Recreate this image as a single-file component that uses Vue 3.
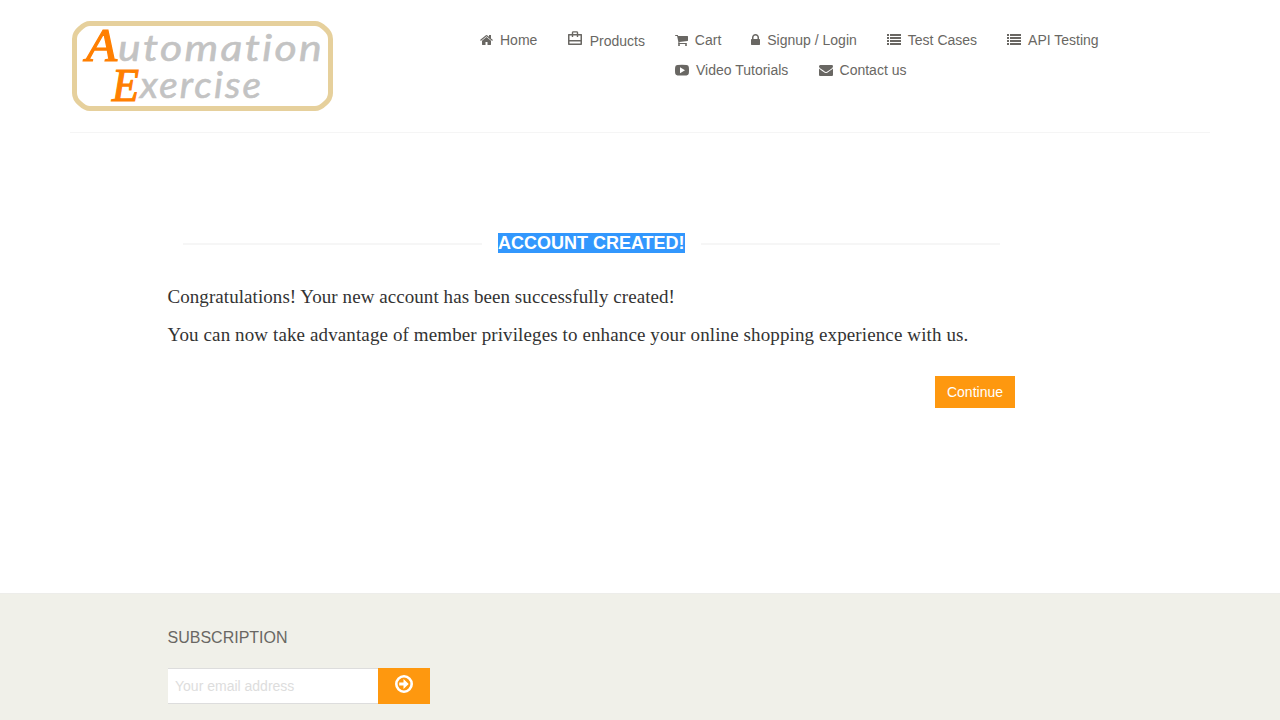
<script setup>
const icons = {
  home: { w: 13, box: '64 0 1664 1792', d: 'M1472 992v480q0 26-19 45t-45 19h-384v-384h-256v384h-384q-26 0-45-19t-19-45v-480q0-1 .5-3t.5-3l575-474 575 474q1 2 1 6zm223-69l-62 74q-8 9-21 11h-3q-13 0-21-7l-692-577-692 577q-12 8-24 7-13-2-21-11l-62-74q-8-10-7-23.5t11-21.5l719-599q32-26 76-26t76 26l244 204v-195q0-14 9-23t23-9h192q14 0 23 9t9 23v408l219 182q10 8 11 21.5t-7 23.5z' },
  bag: { w: 16, box: '0 0 16 14', d: 'M1.600 3H4.800V1.500Q5 .3 6.200 .3h3.600Q11 .3 11.200 1.500V3h3.200Q15 3 15 3.600v9.600q0 .8-.8.8H1.800Q1 14 1 13.200V3.600Q1 3 1.600 3zM6.200 1.600V3h3.600V1.600zM2.500 4.400v4.600h11V4.400H11.200V6H9.800V4.400H6.200V6H4.800V4.400zM2.500 10.500v2h11v-2z' },
  cart: { w: 13, box: '64 0 1664 1792', d: 'M704 1536q0 52-38 90t-90 38-90-38-38-90 38-90 90-38 90 38 38 90zm896 0q0 52-38 90t-90 38-90-38-38-90 38-90 90-38 90 38 38 90zm128-1088v512q0 24-16.5 42.5t-40.5 21.5l-1044 122q13 60 13 70 0 16-24 64h920q26 0 45 19t19 45-19 45-45 19h-1024q-26 0-45-19t-19-45q0-11 8-31.5t16-36 21.5-40 15.5-29.5l-177-823h-204q-26 0-45-19t-19-45 19-45 45-19h256q16 0 28.5 6.5t19.5 15.5 13 24.5 8 26 5.5 29.5 4.5 26h1201q26 0 45 19t19 45z' },
  lock: { w: 9, box: '320 0 1152 1792', d: 'M640 768h512v-192q0-106-75-181t-181-75-181 75-75 181v192zm832 96v576q0 40-28 68t-68 28h-960q-40 0-68-28t-28-68v-576q0-40 28-68t68-28h32v-192q0-184 132-316t316-132 316 132 132 316v192h32q40 0 68 28t28 68z' },
  list: { w: 14, box: '0 0 14 14', d: 'M0 1h2v2H0zM3 1h11v2H3zM0 4h2v2H0zM3 4h11v2H3zM0 7h2v2H0zM3 7h11v2H3zM0 10h2v2H0zM3 10h11v2H3z' },
  video: { w: 14, box: '0 0 14 14', d: 'M2.500 2Q7 1.700 11.500 2 13.600 2.100 13.800 4 14.200 7 13.800 10.500 13.600 12.300 11.500 12.400 7 12.700 2.500 12.400 .4 12.300 .2 10.500-.2 7 .2 4 .4 2.100 2.500 2zM5 4.200v6l5-3z' },
  mail: { w: 14, box: '0 0 1792 1792', d: 'M1792 710v794q0 66-47 113t-113 47h-1472q-66 0-113-47t-47-113v-794q44 49 101 87 362 246 497 345 57 42 92.500 65.500t94.500 48 110 24.500h2q51 0 110-24.500t94.500-48 92.500-65.500q170-123 498-345 57-39 100-87zm0-294q0 79-49 151t-122 123q-376 261-468 325-10 7-42.500 31t-54 38.500-52 32.500-57.500 27-50 9h-2q-23 0-50-9t-57.500-27-52-32.500-54-38.500-42.500-31q-91-64-262-182.500t-205-142.500q-62-42-117-115.500t-55-136.500q0-78 41.500-130t118.500-52h1472q65 0 112.500 47t47.500 113z' }
}
const rows = [
  [['home', 'Home'], ['bag', 'Products'], ['cart', 'Cart'], ['lock', 'Signup / Login'], ['list', 'Test Cases'], ['list', 'API Testing']],
  [['video', 'Video Tutorials'], ['mail', 'Contact us']]
]
</script>

<template>
  <div class="page">
    <header>
      <svg class="logo" width="262" height="90" viewBox="0 0 262 90">
        <path d="M18 2.500H243Q248 2.500 253 7.500Q258.500 12 258.500 18V72Q258.500 78 253 82.500Q248 87.500 243 87.500H18Q13 87.500 8 82.500Q2.500 78 2.500 72V18Q2.500 12 8 7.500Q13 2.500 18 2.500Z" fill="none" stroke="#e6d09c" stroke-width="5" />
        <g class="lettering">
          <text class="cap" x="14" y="40" textLength="31" lengthAdjust="spacingAndGlyphs">A</text>
          <text x="46" y="40" textLength="206" lengthAdjust="spacingAndGlyphs">utomation</text>
          <text class="cap" x="40" y="80" textLength="27" lengthAdjust="spacingAndGlyphs">E</text>
          <text x="68" y="77" textLength="123" lengthAdjust="spacingAndGlyphs">xercise</text>
        </g>
      </svg>
      <nav>
        <div v-for="(row, i) in rows" :key="i" class="row">
          <a v-for="[icon, label] in row" :key="label" :class="icon">
            <svg :width="icons[icon].w" height="14" :viewBox="icons[icon].box"><path :d="icons[icon].d" fill-rule="evenodd" /></svg>
            <span>{{ label }}</span>
          </a>
        </div>
      </nav>
    </header>
    <main>
      <h2><i></i><b>ACCOUNT CREATED!</b><i></i></h2>
      <p class="first">Congratulations! Your new account has been successfully created!</p>
      <p class="second">You can now take advantage of member privileges to enhance your online shopping experience with us.</p>
      <button class="continue">Continue</button>
    </main>
    <footer>
      <h3>SUBSCRIPTION</h3>
      <form @submit.prevent>
        <input type="email" placeholder="Your email address" />
        <button aria-label="Subscribe">
          <svg width="18" height="18" viewBox="0 0 18 18"><circle cx="9" cy="9" r="7.700" fill="none" stroke="#fff" stroke-width="2.600" /><path d="M4.200 7.500h4.300V4.100L13.700 9l-5.200 4.900v-3.400H4.200z" fill="#fff" /></svg>
        </button>
      </form>
    </footer>
  </div>
</template>

<style>
body { margin: 0; overflow: hidden; }
</style>
<style scoped>
* { box-sizing: border-box; }
.page { width: 1280px; height: 720px; background: #fff; font: 14px/20px "Liberation Sans", Arial, sans-serif; color: #696763; overflow: hidden; display: flex; flex-direction: column; }
header { width: 1140px; height: 133px; margin: 0 70px; padding: 21px 0 0 2px; border-bottom: 1px solid #f5f5f5; display: flex; flex: none; }
.logo { flex: none; overflow: visible; }
.lettering { font-family: Lato, sans-serif; font-style: italic; font-weight: 400; font-size: 36px; font-variant-ligatures: none; letter-spacing: 2px; fill: #c3c3c3; stroke: #c3c3c3; stroke-width: .600; }
.cap { font-family: "Liberation Serif", serif; letter-spacing: 0; font-size: 46px; fill: #ff7f00; stroke: #ff7f00; stroke-width: 1.200; }
nav { margin: 9px 0 0 146px; }
.row { display: flex; gap: 30px; height: 30px; }
.row + .row { margin-left: 195px; gap: 30.200px; }
a { display: flex; gap: 7px; height: 20px; align-items: center; white-space: nowrap; }
a svg { fill: #696763; flex: none; }
a.bag svg { margin-top: -5px; }
a.bag { gap: 6.600px; margin: 0 -.200px; }
a.bag span { padding-top: 2px; }
main { width: 848px; height: 460px; margin-left: 167px; display: flex; flex-direction: column; flex: none; }
h2 { margin: 100px 15px 0 16px; font-size: 18px; line-height: 20px; height: 20px; display: flex; align-items: center; }
h2 i { flex: 1; height: 2px; background: #f6f6f6; margin-top: 2px; }
h2 b { margin: 0 16px 0 15.500px; color: #fff; background: #3297fd; white-space: nowrap; }
p { margin: 0; padding-left: .500px; font: 19px/38px "Liberation Serif", serif; color: #333; white-space: nowrap; }
.first { margin-top: 25px; letter-spacing: .065px; }
.second { letter-spacing: .115px; }
.continue { align-self: flex-end; width: 80px; height: 32px; margin-top: 22px; }
button { border: 0; padding: 0; background: #fe980f; color: #fff; font: 14px/20px "Liberation Sans", Arial, sans-serif; }
footer { flex: 1; background: #f0f0e9; padding: 34px 0 0 168px; border-top: 1px solid #ededea; }
h3 { margin: 0 0 20px -.500px; font-size: 16px; line-height: 20px; font-weight: 400; }
form { display: flex; height: 36px; }
input { width: 210px; height: 36px; border: 1px solid #ddd; border-width: 1px 0; border-radius: 0; padding: 0 7px; font: 14px "Liberation Sans", Arial, sans-serif; background: #fff; }
input::placeholder { color: #ddd; opacity: 1; }
form button { width: 52px; height: 36px; display: flex; justify-content: center; padding-top: 7px; }
</style>
